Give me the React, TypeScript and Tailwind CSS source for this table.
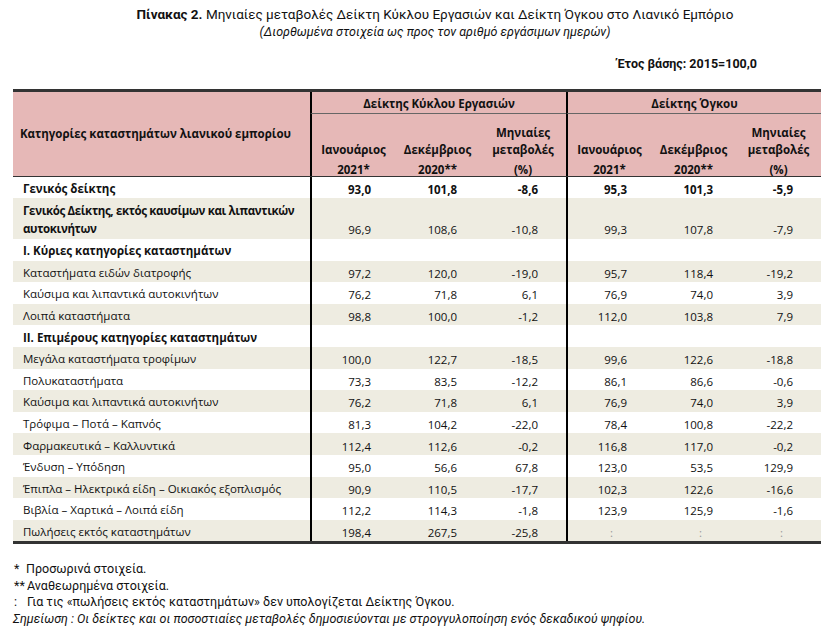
import React from 'react';

type Row = {
  label: React.ReactNode;
  v?: string[];
  bold?: boolean;
  boldValues?: boolean;
  tall?: boolean;
};

const rows: Row[] = [
  { label: 'Γενικός δείκτης', v: ['93,0', '101,8', '-8,6', '95,3', '101,3', '-5,9'], bold: true, boldValues: true },
  {
    label: (
      <>
        Γενικός Δείκτης, εκτός καυσίμων και λιπαντικών
        <br />
        αυτοκινήτων
      </>
    ),
    v: ['96,9', '108,6', '-10,8', '99,3', '107,8', '-7,9'],
    bold: true,
    tall: true,
  },
  { label: 'I. Κύριες κατηγορίες καταστημάτων', bold: true },
  { label: 'Καταστήματα ειδών διατροφής', v: ['97,2', '120,0', '-19,0', '95,7', '118,4', '-19,2'] },
  { label: 'Καύσιμα και λιπαντικά αυτοκινήτων', v: ['76,2', '71,8', '6,1', '76,9', '74,0', '3,9'] },
  { label: 'Λοιπά καταστήματα', v: ['98,8', '100,0', '-1,2', '112,0', '103,8', '7,9'] },
  { label: 'II. Επιμέρους κατηγορίες καταστημάτων', bold: true },
  { label: 'Μεγάλα καταστήματα τροφίμων', v: ['100,0', '122,7', '-18,5', '99,6', '122,6', '-18,8'] },
  { label: 'Πολυκαταστήματα', v: ['73,3', '83,5', '-12,2', '86,1', '86,6', '-0,6'] },
  { label: 'Καύσιμα και λιπαντικά αυτοκινήτων', v: ['76,2', '71,8', '6,1', '76,9', '74,0', '3,9'] },
  { label: 'Τρόφιμα – Ποτά – Καπνός', v: ['81,3', '104,2', '-22,0', '78,4', '100,8', '-22,2'] },
  { label: 'Φαρμακευτικά – Καλλυντικά', v: ['112,4', '112,6', '-0,2', '116,8', '117,0', '-0,2'] },
  { label: 'Ένδυση – Υπόδηση', v: ['95,0', '56,6', '67,8', '123,0', '53,5', '129,9'] },
  { label: 'Έπιπλα – Ηλεκτρικά είδη – Οικιακός εξοπλισμός', v: ['90,9', '110,5', '-17,7', '102,3', '122,6', '-16,6'] },
  { label: 'Βιβλία – Χαρτικά – Λοιπά είδη', v: ['112,2', '114,3', '-1,8', '123,9', '125,9', '-1,6'] },
  { label: 'Πωλήσεις εκτός καταστημάτων', v: ['198,4', '267,5', '-25,8', ':', ':', ':'] },
];

// right padding per value column
const valuePad = ['pr-[24px]', 'pr-[23px]', 'pr-[28px]', 'pr-[24px]', 'pr-[23px]', 'pr-[28px]'];
const colonPad = ['', '', '', 'pr-[38px]', 'pr-[34px]', 'pr-[38px]'];

const cols = 'grid grid-cols-[297px_85px_85px_86px_85px_85px_85px]';

function SubHeader({ top, mid, bottom, divider }: { top?: string; mid: string; bottom: string; divider?: boolean }) {
  return (
    <div
      className={`flex flex-col items-center justify-end font-bold ${divider ? 'border-l-2 border-black' : ''}`}
    >
      {top && <div className="leading-[17px]">{top}</div>}
      <div className="leading-[18px]">{mid}</div>
      <div className="mt-[2px] mb-[-3px] leading-[18px]">{bottom}</div>
    </div>
  );
}

export default function App() {
  return (
    <div className="w-[836px] h-[642px] bg-white text-[#111]" style={{ fontFamily: '"Open Sans", sans-serif' }}>
      <div className="pt-[5px] pl-[34px] text-center" style={{ fontFamily: 'Roboto, sans-serif' }}>
        <div className="text-[13.5px] leading-[18px]">
          <span className="font-bold">Πίνακας 2.</span> Μηνιαίες μεταβολές Δείκτη Κύκλου Εργασιών και Δείκτη Όγκου
          στο Λιανικό Εμπόριο
        </div>
        <div className="text-[12.5px] leading-[18px] italic">
          (Διορθωμένα στοιχεία ως προς τον αριθμό εργάσιμων ημερών)
        </div>
      </div>
      <div
        className="mt-[14px] pr-[79px] text-right text-[12.5px] leading-[18px] font-bold"
        style={{ fontFamily: 'Roboto, sans-serif' }}
      >
        Έτος βάσης: 2015=100,0
      </div>

      <div className="ml-[13px] mt-[16px] w-[808px] text-[11.5px]">
        <div className={`${cols} grid-rows-[22px_62px] bg-[#e6b8b7] border-t-[3px] border-b border-[#333]`}>
          <div className="row-span-2 flex items-center justify-center pr-[12px] font-bold">
            Κατηγορίες καταστημάτων λιανικού εμπορίου
          </div>
          <div className="col-span-3 flex items-center justify-center pt-[2px] border-l-2 border-b border-l-black border-b-[#666] font-bold">
            Δείκτης Κύκλου Εργασιών
          </div>
          <div className="col-span-3 flex items-center justify-center pt-[2px] border-l-2 border-b border-l-black border-b-[#666] font-bold">
            Δείκτης Όγκου
          </div>
          <SubHeader mid="Ιανουάριος" bottom="2021*" divider />
          <SubHeader mid="Δεκέμβριος" bottom="2020**" />
          <SubHeader top="Μηνιαίες" mid="μεταβολές" bottom="(%)" />
          <SubHeader mid="Ιανουάριος" bottom="2021*" divider />
          <SubHeader mid="Δεκέμβριος" bottom="2020**" />
          <SubHeader top="Μηνιαίες" mid="μεταβολές" bottom="(%)" />
        </div>

        <div className="border-b-[3px] border-[#333]">
          {rows.map((row, i) => (
            <div
              key={i}
              className={`${cols} ${i === 0 ? 'h-[21px]' : row.tall ? 'h-[41px]' : 'h-[21.6px]'} ${
                i % 2 === 1 ? 'bg-[#eeece1]' : ''
              }`}
            >
              <div
                className={`flex items-center pl-[10px] pt-[3px] leading-[18px] whitespace-nowrap ${
                  row.bold ? 'font-bold' : ''
                } ${row.tall ? 'tracking-[-0.35px]' : ''}`}
              >
                <div>{row.label}</div>
              </div>
              {Array.from({ length: 6 }).map((_, j) => {
                const val = row.v?.[j];
                const colon = val === ':';
                return (
                  <div
                    key={j}
                    className={`flex justify-end ${row.tall ? 'items-end pb-[1px]' : 'items-center pt-[4px]'} ${
                      colon ? `${colonPad[j]} text-[#999]` : valuePad[j]
                    } ${j === 0 || j === 3 ? 'border-l-2 border-black' : ''} ${row.boldValues ? 'font-bold' : ''}`}
                  >
                    {val}
                  </div>
                );
              })}
            </div>
          ))}
        </div>
      </div>

      <div className="mt-[17px] pl-[14px] text-[12.5px] leading-[16.5px]" style={{ fontFamily: 'Roboto, sans-serif' }}>
        <div className="flex">
          <span className="w-[12px]">*</span>
          <span>Προσωρινά στοιχεία.</span>
        </div>
        <div className="flex">
          <span className="w-[13px]">**</span>
          <span>Αναθεωρημένα στοιχεία.</span>
        </div>
        <div className="flex">
          <span className="w-[13px]">:</span>
          <span>Για τις «πωλήσεις εκτός καταστημάτων» δεν υπολογίζεται Δείκτης Όγκου.</span>
        </div>
        <div className="-ml-[1px] italic">
          Σημείωση : Οι δείκτες και οι ποσοστιαίες μεταβολές δημοσιεύονται με στρογγυλοποίηση ενός δεκαδικού ψηφίου.
        </div>
      </div>
    </div>
  );
}
